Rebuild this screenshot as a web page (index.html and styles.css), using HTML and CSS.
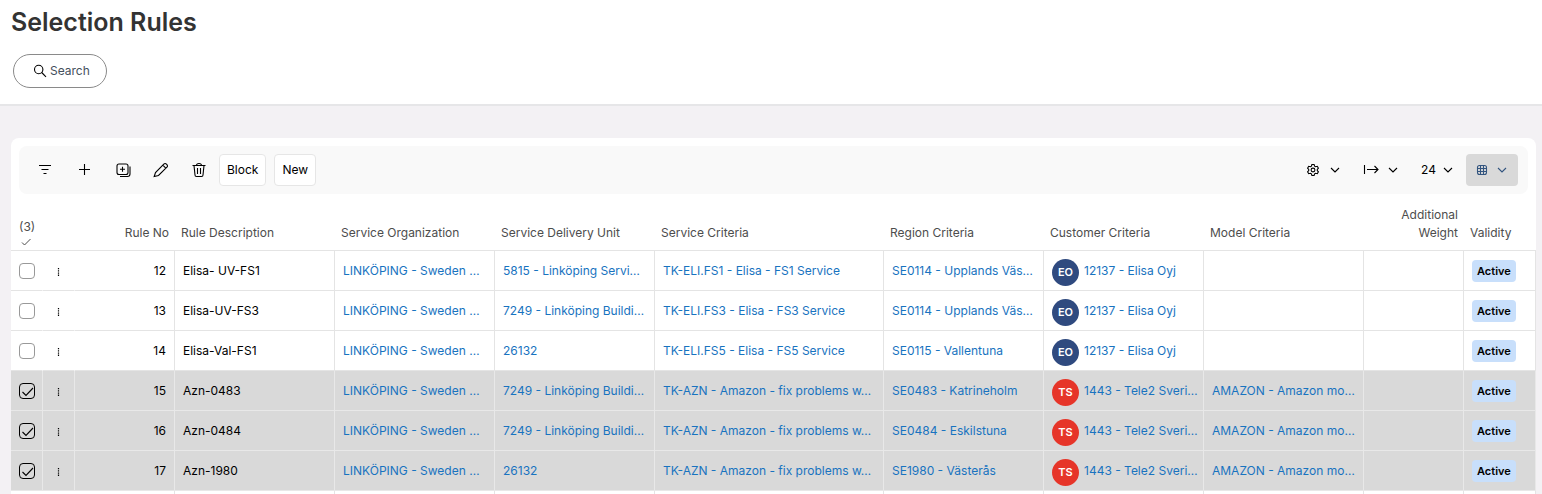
FILE: index.html
```html
<!DOCTYPE html>
<html lang="en">
<head>
    <meta charset="UTF-8">
    <meta name="viewport" content="width=device-width, initial-scale=1.0">
    <title>Selection Rules</title>
    <link rel="stylesheet" href="styles.css">
</head>
<body>
    <svg class="sprite" aria-hidden="true">
        <symbol id="chevron" viewBox="0 0 12 12"><path d="M2 4l4 4 4-4"/></symbol>
        <symbol id="dots" viewBox="0 0 10 10"><path d="M4.500 1v8" stroke-width="1.2" stroke-dasharray="1.3 0.9"/></symbol>
    </svg>
    <header class="page-header">
        <h1>Selection Rules</h1>
        <button type="button" class="search-btn">
            <svg width="14" height="14" viewBox="0 0 14 14"><circle cx="5.700" cy="5.500" r="4.200"/><path d="M8.700 8.500L13 12.800"/></svg>
            Search
        </button>
    </header>
    <main class="content">
        <div class="card">
            <div class="toolbar">
                <div class="tools">
                    <button type="button" class="icon-btn" aria-label="Filter">
                        <svg width="16" height="16" viewBox="0 0 16 16"><path d="M0 3.500h12M2.500 7.500h7M4.500 11.500h3"/></svg>
                    </button>
                    <button type="button" class="icon-btn" aria-label="Add">
                        <svg width="16" height="16" viewBox="0 0 16 16"><path d="M7.500 2v11M2 7.500h11"/></svg>
                    </button>
                    <button type="button" class="icon-btn" aria-label="Duplicate">
                        <svg width="16" height="16" viewBox="0 0 16 16"><rect x="2" y="2" width="11" height="10.500" rx="2"/><path d="M7.500 4.800v5M5 7.300h5M15 4.500v7.500a2.500 2.500 0 0 1-2.500 2.500H5"/></svg>
                    </button>
                    <button type="button" class="icon-btn" aria-label="Edit">
                        <svg width="16" height="16" viewBox="0 0 16 16"><path d="M1.200 14.500l1.300-4 8.300-8.400a1.800 1.800 0 0 1 2.600 0l.5.500a1.800 1.800 0 0 1 0 2.600l-8.400 8.300zM9.800 3.200l3 3"/></svg>
                    </button>
                    <button type="button" class="icon-btn" aria-label="Delete">
                        <svg width="16" height="16" viewBox="0 0 16 16"><path d="M1.500 3.500h13M5.500 3.500c0-1.400.8-2 2.500-2s2.500.6 2.500 2M3 3.500l1 9.500a1.500 1.500 0 0 0 1.500 1.500h5A1.500 1.500 0 0 0 12 13l1-9.500M6.500 6v6M9.500 6v6"/></svg>
                    </button>
                    <button type="button" class="text-btn">Block</button>
                    <button type="button" class="text-btn">New</button>
                </div>
                <div class="options">
                    <button type="button" class="menu-btn" aria-label="Settings">
                        <svg width="16" height="16" viewBox="0 0 16 16"><circle cx="8" cy="8" r="1.900"/><path d="M6.900 2.500h2.200l.5 1.600 1 .6 1.700-.4 1.100 1.900-1.100 1.200v1.200l1.100 1.200-1.100 1.900-1.700-.4-1 .6-.5 1.600H6.900l-.5-1.600-1-.6-1.700.4-1.100-1.900 1.100-1.200V7.400L2.600 6.200l1.100-1.900 1.700.4 1-.6z"/></svg>
                        <svg width="12" height="12"><use href="#chevron"/></svg>
                    </button>
                    <button type="button" class="menu-btn" aria-label="Export">
                        <svg width="16" height="16" viewBox="0 0 16 16"><path d="M1.500 3v9M4 7.500h11M11.500 4L15 7.500 11.500 11"/></svg>
                        <svg width="12" height="12"><use href="#chevron"/></svg>
                    </button>
                    <select class="page-size" aria-label="Rows per page">
                        <option>24</option>
                    </select>
                    <button type="button" class="menu-btn view-btn" aria-label="View">
                        <svg width="12" height="12" viewBox="0 0 12 12"><rect x="1.500" y="1.500" width="9" height="9" rx="2"/><path d="M4.500 1.500v9M7.500 1.500v9M1.500 4.500h9M1.500 7.500h9"/></svg>
                        <svg width="12" height="12"><use href="#chevron"/></svg>
                    </button>
                </div>
            </div>
            <table class="rules">
                <colgroup>
                    <col class="col-icon">
                    <col class="col-icon">
                    <col class="col-number">
                    <col class="col-text">
                    <col class="col-text">
                    <col class="col-text">
                    <col>
                    <col class="col-text">
                    <col class="col-text">
                    <col class="col-text">
                    <col class="col-number">
                    <col class="col-status">
                </colgroup>
                <thead>
                    <tr>
                        <th class="selected-count">(3)<svg width="10" height="8" viewBox="0 0 10 8"><path d="M1 4.500L3.500 7 9.500 1"/></svg></th>
                        <th></th>
                        <th class="num">Rule No</th>
                        <th>Rule Description</th>
                        <th>Service Organization</th>
                        <th>Service Delivery Unit</th>
                        <th>Service Criteria</th>
                        <th>Region Criteria</th>
                        <th>Customer Criteria</th>
                        <th>Model Criteria</th>
                        <th class="num">Additional Weight</th>
                        <th>Validity</th>
                    </tr>
                </thead>
                <tbody>
                    <tr>
                        <td class="pick"><input type="checkbox" aria-label="Select rule 12"></td>
                        <td class="more"><button type="button" aria-label="Row menu"><svg width="10" height="10"><use href="#dots"/></svg></button></td>
                        <td class="num">12</td>
                        <td>Elisa- UV-FS1</td>
                        <td><a href="#">LINKÖPING - Sweden …</a></td>
                        <td><a href="#">5815 - Linköping Servi…</a></td>
                        <td><a href="#">TK-ELI.FS1 - Elisa - FS1 Service</a></td>
                        <td><a href="#">SE0114 - Upplands Väs…</a></td>
                        <td><div class="customer"><span class="avatar">EO</span><a href="#">12137 - Elisa Oyj</a></div></td>
                        <td></td>
                        <td></td>
                        <td><span class="badge">Active</span></td>
                    </tr>
                    <tr>
                        <td class="pick"><input type="checkbox" aria-label="Select rule 13"></td>
                        <td class="more"><button type="button" aria-label="Row menu"><svg width="10" height="10"><use href="#dots"/></svg></button></td>
                        <td class="num">13</td>
                        <td>Elisa-UV-FS3</td>
                        <td><a href="#">LINKÖPING - Sweden …</a></td>
                        <td><a href="#">7249 - Linköping Buildi…</a></td>
                        <td><a href="#">TK-ELI.FS3 - Elisa - FS3 Service</a></td>
                        <td><a href="#">SE0114 - Upplands Väs…</a></td>
                        <td><div class="customer"><span class="avatar">EO</span><a href="#">12137 - Elisa Oyj</a></div></td>
                        <td></td>
                        <td></td>
                        <td><span class="badge">Active</span></td>
                    </tr>
                    <tr>
                        <td class="pick"><input type="checkbox" aria-label="Select rule 14"></td>
                        <td class="more"><button type="button" aria-label="Row menu"><svg width="10" height="10"><use href="#dots"/></svg></button></td>
                        <td class="num">14</td>
                        <td>Elisa-Val-FS1</td>
                        <td><a href="#">LINKÖPING - Sweden …</a></td>
                        <td><a href="#">26132</a></td>
                        <td><a href="#">TK-ELI.FS5 - Elisa - FS5 Service</a></td>
                        <td><a href="#">SE0115 - Vallentuna</a></td>
                        <td><div class="customer"><span class="avatar">EO</span><a href="#">12137 - Elisa Oyj</a></div></td>
                        <td></td>
                        <td></td>
                        <td><span class="badge">Active</span></td>
                    </tr>
                    <tr class="selected">
                        <td class="pick"><input type="checkbox" aria-label="Select rule 15" checked></td>
                        <td class="more"><button type="button" aria-label="Row menu"><svg width="10" height="10"><use href="#dots"/></svg></button></td>
                        <td class="num">15</td>
                        <td>Azn-0483</td>
                        <td><a href="#">LINKÖPING - Sweden …</a></td>
                        <td><a href="#">7249 - Linköping Buildi…</a></td>
                        <td><a href="#">TK-AZN - Amazon - fix problems w…</a></td>
                        <td><a href="#">SE0483 - Katrineholm</a></td>
                        <td><div class="customer"><span class="avatar red">TS</span><a href="#">1443 - Tele2 Sveri…</a></div></td>
                        <td><a href="#">AMAZON - Amazon mo…</a></td>
                        <td></td>
                        <td><span class="badge">Active</span></td>
                    </tr>
                    <tr class="selected">
                        <td class="pick"><input type="checkbox" aria-label="Select rule 16" checked></td>
                        <td class="more"><button type="button" aria-label="Row menu"><svg width="10" height="10"><use href="#dots"/></svg></button></td>
                        <td class="num">16</td>
                        <td>Azn-0484</td>
                        <td><a href="#">LINKÖPING - Sweden …</a></td>
                        <td><a href="#">7249 - Linköping Buildi…</a></td>
                        <td><a href="#">TK-AZN - Amazon - fix problems w…</a></td>
                        <td><a href="#">SE0484 - Eskilstuna</a></td>
                        <td><div class="customer"><span class="avatar red">TS</span><a href="#">1443 - Tele2 Sveri…</a></div></td>
                        <td><a href="#">AMAZON - Amazon mo…</a></td>
                        <td></td>
                        <td><span class="badge">Active</span></td>
                    </tr>
                    <tr class="selected">
                        <td class="pick"><input type="checkbox" aria-label="Select rule 17" checked></td>
                        <td class="more"><button type="button" aria-label="Row menu"><svg width="10" height="10"><use href="#dots"/></svg></button></td>
                        <td class="num">17</td>
                        <td>Azn-1980</td>
                        <td><a href="#">LINKÖPING - Sweden …</a></td>
                        <td><a href="#">26132</a></td>
                        <td><a href="#">TK-AZN - Amazon - fix problems w…</a></td>
                        <td><a href="#">SE1980 - Västerås</a></td>
                        <td><div class="customer"><span class="avatar red">TS</span><a href="#">1443 - Tele2 Sveri…</a></div></td>
                        <td><a href="#">AMAZON - Amazon mo…</a></td>
                        <td></td>
                        <td><span class="badge">Active</span></td>
                    </tr>
                    <tr>
                        <td class="pick"></td>
                        <td class="more"></td>
                        <td></td>
                        <td></td>
                        <td></td>
                        <td></td>
                        <td></td>
                        <td></td>
                        <td></td>
                        <td></td>
                        <td></td>
                        <td></td>
                    </tr>
                </tbody>
            </table>
        </div>
    </main>
</body>
</html>
```
FILE: styles.css
```css
* {
    box-sizing: border-box;
}
body {
    display: flex;
    flex-direction: column;
    margin: 0;
    height: 100vh;
    background: #f3f1f4;
    color: #000;
    font-family: Inter, sans-serif;
    font-size: 12px;
    line-height: 18px;
}
button, select {
    font: inherit;
    color: inherit;
    cursor: pointer;
}
svg {
    display: block;
    flex: none;
    fill: none;
    stroke: currentColor;
    stroke-width: 1.1;
}
.sprite {
    display: none;
}

/* header */
.page-header {
    padding: 6px 11px 16px;
    background: #fff;
    border-bottom: 2px solid #e6e6e8;
}
h1 {
    margin: 0 0 16px;
    font-size: 25px;
    line-height: 32px;
    font-weight: 600;
    color: #333;
}
.search-btn {
    display: flex;
    align-items: center;
    gap: 3px;
    height: 34px;
    margin-left: 2px;
    padding: 0 16px 0 19px;
    background: #fff;
    border: 1px solid #8a8a8a;
    border-radius: 17px;
    color: #44505c;
}
.search-btn svg {
    color: #000;
}

/* card and toolbar */
.content {
    flex: 1;
    min-height: 0;
    padding: 32px 6px 0 11px;
    overflow: hidden;
}
.card {
    height: 100%;
    padding-top: 8px;
    background: #fff;
    border-radius: 8px 8px 0 0;
    overflow: hidden;
}
.toolbar {
    display: flex;
    justify-content: space-between;
    margin: 0 8px;
    padding: 8px 10px 8px 9px;
    background: #f9f9f9;
    border-radius: 8px;
}
.tools, .options {
    display: flex;
    align-items: center;
}
.options {
    gap: 2px;
}
.icon-btn {
    display: flex;
    align-items: center;
    justify-content: center;
    width: 38px;
    height: 32px;
    padding: 0;
    background: none;
    border: none;
}
.text-btn {
    height: 32px;
    margin-left: 1px;
    padding: 0 7px;
    background: #fff;
    border: 1px solid #e6e6e6;
    border-radius: 4px;
}
.text-btn + .text-btn {
    margin-left: 8px;
}
.menu-btn {
    display: flex;
    align-items: center;
    gap: 8px;
    height: 32px;
    padding: 0 10px;
    background: none;
    border: none;
    border-radius: 4px;
}
.view-btn {
    background: #d9d9d9;
    color: #33557f;
}
.page-size {
    appearance: none;
    height: 32px;
    padding: 0 28px 0 10px;
    border: none;
    background: url("data:image/svg+xml,%3Csvg xmlns='http://www.w3.org/2000/svg' width='12' height='12' fill='none' stroke='black' stroke-width='1.1'%3E%3Cpath d='M2 4l4 4 4-4'/%3E%3C/svg%3E") no-repeat right 10px center;
}

/* table */
.rules {
    width: 100%;
    table-layout: fixed;
    border-collapse: separate;
    border-spacing: 0;
}
.col-icon {
    width: 32px;
}
.col-number {
    width: 100px;
}
.col-text {
    width: 160px;
}
.col-status {
    width: 72px;
}
th {
    height: 57px;
    padding: 0 6px 8px;
    border-bottom: 1px solid #e4e4e4;
    font-weight: 400;
    text-align: left;
    vertical-align: bottom;
    color: #4d4d4d;
}
td {
    height: 40px;
    padding: 0 8px;
    border-right: 1px solid #e4e4e4;
    border-bottom: 1px solid #e4e4e4;
    white-space: nowrap;
    overflow: hidden;
}
th.num, td.num {
    text-align: right;
}
th.selected-count {
    padding: 0 0 4px 8px;
}
.selected-count svg {
    margin: 2px 0 0 2px;
    stroke-width: 1;
}
.pick, .more {
    border-right-color: transparent;
}
.selected td {
    background: #d9d9d9;
    border-color: #e8e8e8;
}
.pick input {
    display: block;
    appearance: none;
    width: 16px;
    height: 16px;
    margin: 0;
    background: #fff;
    border: 1px solid #999;
    border-radius: 4px;
}
.pick input:checked {
    border-color: #000;
    background: url("data:image/svg+xml,%3Csvg xmlns='http://www.w3.org/2000/svg' width='14' height='14' fill='none' stroke='black' stroke-width='1.1'%3E%3Cpath d='M2.500 8l3.500 3.500 7-7.500'/%3E%3C/svg%3E") center no-repeat;
}
.more button {
    display: block;
    margin: 2px auto 0;
    padding: 0;
    background: none;
    border: none;
}
a {
    color: #1873c0;
    text-decoration: none;
}
.customer {
    display: flex;
    align-items: center;
    gap: 5px;
}
.avatar {
    display: flex;
    flex: none;
    align-items: center;
    justify-content: center;
    width: 27px;
    height: 27px;
    margin-top: 3px;
    background: #2f4a7f;
    border-radius: 50%;
    color: #fff;
    font-size: 11px;
    font-weight: 600;
}
.avatar.red {
    background: #e63529;
}
.badge {
    display: inline-block;
    padding: 2px 5px;
    background: #c8dffb;
    border-radius: 4px;
    font-size: 11px;
    font-weight: 600;
}
```
